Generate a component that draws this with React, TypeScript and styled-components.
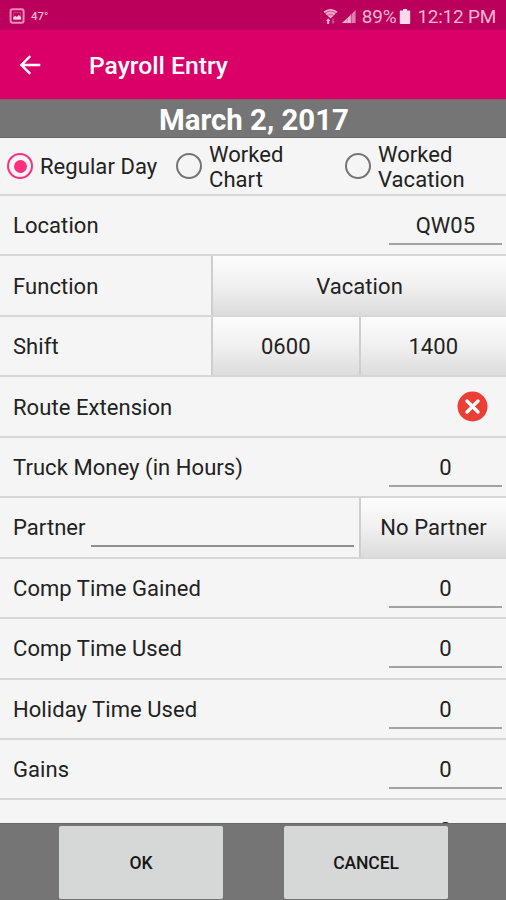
import React from 'react';
import styled, { createGlobalStyle } from 'styled-components';

const GlobalStyle = createGlobalStyle`
  *, *::before, *::after { box-sizing: border-box; }
  body { margin: 0; background: #757575; }
  button, input { font: inherit; color: inherit; }
`;

const Screen = styled.div`
  display: flex;
  flex-direction: column;
  width: 506px;
  height: 900px;
  overflow: hidden;
  background: #f5f5f5;
  color: #222;
  font-family: Roboto, sans-serif;
  font-size: 22px;
  letter-spacing: 0.06px;
`;

const StatusBar = styled.div`
  display: flex;
  flex: none;
  align-items: center;
  height: 30px;
  padding: 2px 10px 0 9px;
  background: #ba005b;
  color: #f3b6d2;
`;

const Temperature = styled.span`
  margin-left: 6px;
  font-size: 11.5px;
  line-height: 14px;
  letter-spacing: 0;
  font-weight: 500;
`;

const StatusGroup = styled.div`
  display: flex;
  align-items: center;
  margin-left: auto;
  font-size: 19px;
  letter-spacing: -0.25px;
  white-space: nowrap;
`;

const Clock = styled.span`
  margin-left: 6px;
`;

const AppBar = styled.header`
  display: flex;
  flex: none;
  align-items: center;
  height: 69px;
  padding-left: 18px;
  background: #db0068;
  color: #fff;
`;

const BackButton = styled.button`
  display: flex;
  width: 24px;
  padding: 0;
  border: 0;
  background: none;
`;

const Title = styled.h1`
  margin: 3px 0 0 47px;
  font-size: 24.7px;
  line-height: 30px;
  font-weight: 500;
  letter-spacing: 0;
`;

const DateBanner = styled.div`
  flex: none;
  height: 39px;
  padding: 2px 0 0 2px;
  border-top: 1px solid #7d6370;
  border-bottom: 1px solid #686868;
  background: #757575;
  color: #fff;
  font-size: 29.4px;
  line-height: 36px;
  font-weight: 700;
  letter-spacing: 0;
  text-align: center;
`;

const DayTypes = styled.div`
  display: grid;
  flex: none;
  grid-template-columns: 169px 169px 1fr;
  height: 58px;
  padding-left: 7px;
  border-bottom: 2px solid #d7d7d7;
`;

const DayType = styled.div`
  display: flex;
  align-items: center;
  gap: 7px;
  line-height: 25.5px;
`;

const DayTypeName = styled.span`
  padding-top: 2px;
`;

const Radio = styled.span<{ $checked?: boolean }>`
  display: flex;
  flex: none;
  align-items: center;
  justify-content: center;
  width: 26px;
  height: 26px;
  border: 2.4px solid ${(p) => (p.$checked ? '#ff2f7d' : '#747474')};
  border-radius: 50%;

  &::after {
    content: '';
    width: 13px;
    height: 13px;
    border-radius: 50%;
    background: ${(p) => (p.$checked ? '#ff2f7d' : 'transparent')};
  }
`;

const Form = styled.div`
  flex: 1;
  min-height: 0;
  overflow: hidden;
`;

const Row = styled.div`
  display: flex;
  align-items: stretch;
  height: 60.45px;
  border-bottom: 2px solid #d7d7d7;

  &:last-child {
    height: 61.45px;
    padding-top: 1px;
  }
`;

const Label = styled.div<{ $grow?: boolean }>`
  display: flex;
  flex: ${(p) => (p.$grow === false ? 'none' : 1)};
  align-items: center;
  padding: 1px 0 0 13px;
  white-space: nowrap;
`;

const Value = styled.div`
  display: flex;
  align-items: center;
  justify-content: center;
  width: 113px;
  height: 49px;
  margin-right: 4px;
  padding-top: 12px;
  border-bottom: 2px solid #a3a3a3;
`;

const PartnerLine = styled.div`
  flex: 1;
  height: 49px;
  margin: 0 5px 0 5px;
  border-bottom: 2px solid #8f8f8f;
`;

const PickerGroup = styled.div<{ $width: number }>`
  display: flex;
  width: ${(p) => p.$width}px;
`;

const Picker = styled.button`
  flex: 1;
  padding: 1px 0 0;
  border: 0;
  border-left: 2px solid #cecece;
  background: linear-gradient(#fdfdfd, #f0f0f0 50%, #dcdcdc);
  letter-spacing: inherit;
`;

const ClearButton = styled.button`
  display: flex;
  align-items: center;
  padding: 0;
  margin-right: 18px;
  border: 0;
  background: none;
`;

const Footer = styled.footer`
  display: flex;
  flex: none;
  justify-content: center;
  gap: 61px;
  height: 77px;
  padding: 2px 0 1px 1px;
  border-top: 1px solid #686868;
  background: #757575;
`;

const FooterButton = styled.button`
  width: 164px;
  padding: 1px 0 0;
  border: 0;
  border-radius: 2px;
  background: #d6d8d7;
  color: #161616;
  font-size: 17.5px;
  font-weight: 500;
  letter-spacing: -0.1px;
`;

const PictureIcon = () => (
  <svg width="16" height="16" viewBox="0 0 16 16" fill="none">
    <rect x="1.6" y="1.2" width="13" height="13.6" rx="2" stroke="#ee8dbb" strokeWidth="2" />
    <path d="M4.6 4.4h7v7.2h-7z" stroke="#d95596" strokeWidth="0.7" />
    <path d="M4.3 11.4V9.2l2.1-1.5 1.5 1.2 1.9-2 2.3 2.3v2.2z" fill="#fbd3e5" />
  </svg>
);

const WifiIcon = () => (
  <svg width="15" height="17" viewBox="0 0 15 17" fill="none">
    <path d="M1 4Q7.5-.6 14 4L9.8 8.6H5.2z" fill="#d9689f" />
    <path d="M1 4.2Q7.5-.8 14 4.2M3.2 6.4q4.3-3.2 8.6 0" stroke="#f3b6d2" strokeWidth="1.6" />
    <path d="M4.6 7.6h5.8L7.5 10.6z" fill="#f3b6d2" />
    <path d="M5.2 10.2 3 13h1.2v3h2v-3h1.2z" fill="#f3b6d2" />
    <path d="M9.3 10.8h1.5v2.6h1.4L10 16l-2.1-2.6h1.4z" fill="#d34f91" />
  </svg>
);

const SignalIcon = () => (
  <svg width="15" height="15" viewBox="0 0 16 15">
    <path d="M0 14.5 10 5v9.5z" fill="#f3b6d2" />
    <path d="M5.5 9v6M9.5 5v10" stroke="#cf6099" strokeWidth="0.6" />
    <path d="M10.5 4.5 14.5.5v14h-4z" fill="#df7dae" />
  </svg>
);

const BatteryIcon = () => (
  <svg width="12" height="15" viewBox="0 0 12 15">
    <path d="M4 0h4v1.5h2.5q.7 0 .7.7v12q0 .8-.7.8h-9q-.7 0-.7-.8v-12q0-.7.7-.7H4z" fill="#fbdbe9" />
  </svg>
);

const StatusIcons = styled.span`
  display: flex;
  align-items: center;
  gap: 4px;
  margin-right: 5px;
`;

const BatteryLevel = styled.span`
  margin-right: 3px;
`;

const BackArrow = () => (
  <svg width="24" height="22" viewBox="0 0 24 22" fill="none">
    <path d="M22.3 11H3M12.2 2.2 3.4 11l8.8 8.8" stroke="#fff" strokeWidth="2.4" />
  </svg>
);

const ClearIcon = () => (
  <svg width="31" height="31" viewBox="0 0 31 31">
    <circle cx="15.5" cy="15.5" r="15" fill="#ec3f34" />
    <path d="m10 10 11 11m0-11L10 21" stroke="#fff" strokeWidth="3.4" strokeLinecap="round" />
  </svg>
);

const NumberRow = ({ label, value }: { label: string; value: string }) => (
  <Row>
    <Label>{label}</Label>
    <Value>{value}</Value>
  </Row>
);

export default function App() {
  return (
    <>
      <GlobalStyle />
      <Screen>
        <StatusBar>
          <PictureIcon />
          <Temperature>47°</Temperature>
          <StatusGroup>
            <StatusIcons>
              <WifiIcon />
              <SignalIcon />
            </StatusIcons>
            <BatteryLevel>89%</BatteryLevel>
            <BatteryIcon />
            <Clock>12:12 PM</Clock>
          </StatusGroup>
        </StatusBar>
        <AppBar>
          <BackButton aria-label="Back">
            <BackArrow />
          </BackButton>
          <Title>Payroll Entry</Title>
        </AppBar>
        <DateBanner>March 2, 2017</DateBanner>
        <DayTypes>
          <DayType>
            <Radio $checked />
            <DayTypeName>Regular Day</DayTypeName>
          </DayType>
          <DayType>
            <Radio />
            <DayTypeName>Worked<br />Chart</DayTypeName>
          </DayType>
          <DayType>
            <Radio />
            <DayTypeName>Worked<br />Vacation</DayTypeName>
          </DayType>
        </DayTypes>
        <Form>
          <NumberRow label="Location" value="QW05" />
          <Row>
            <Label>Function</Label>
            <PickerGroup $width={295}>
              <Picker>Vacation</Picker>
            </PickerGroup>
          </Row>
          <Row>
            <Label>Shift</Label>
            <PickerGroup $width={295}>
              <Picker>0600</Picker>
              <Picker>1400</Picker>
            </PickerGroup>
          </Row>
          <Row>
            <Label>Route Extension</Label>
            <ClearButton aria-label="Route extension off">
              <ClearIcon />
            </ClearButton>
          </Row>
          <NumberRow label="Truck Money (in Hours)" value="0" />
          <Row>
            <Label $grow={false}>Partner</Label>
            <PartnerLine />
            <PickerGroup $width={147}>
              <Picker>No Partner</Picker>
            </PickerGroup>
          </Row>
          <NumberRow label="Comp Time Gained" value="0" />
          <NumberRow label="Comp Time Used" value="0" />
          <NumberRow label="Holiday Time Used" value="0" />
          <NumberRow label="Gains" value="0" />
          <NumberRow label="Losses" value="0" />
        </Form>
        <Footer>
          <FooterButton>OK</FooterButton>
          <FooterButton>CANCEL</FooterButton>
        </Footer>
      </Screen>
    </>
  );
}
